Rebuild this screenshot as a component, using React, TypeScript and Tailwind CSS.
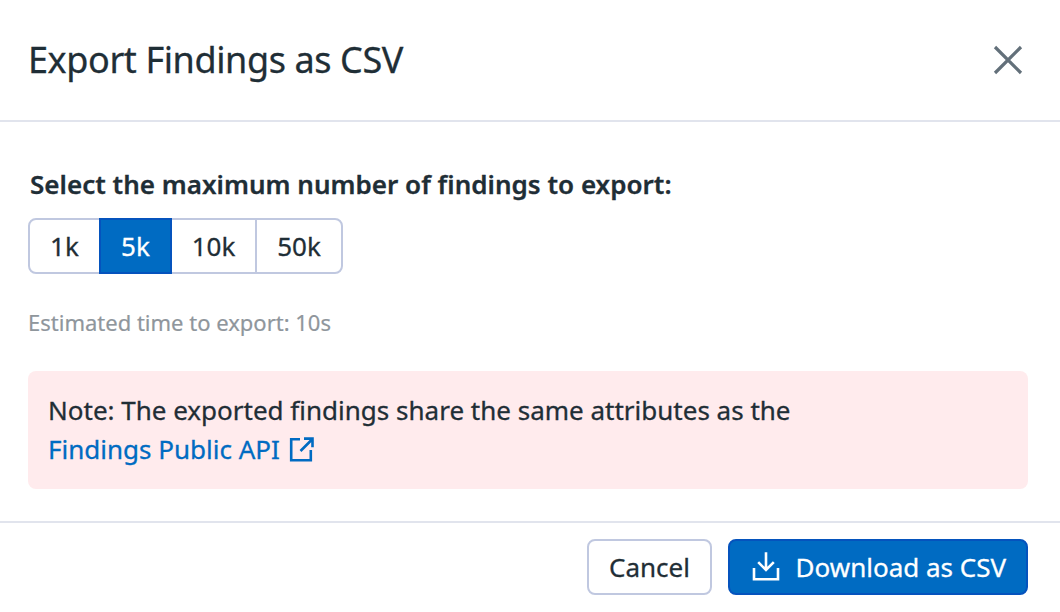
const sizes = ["1k", "5k", "10k", "50k"];
const widths: Record<string, string> = {
  "1k": "w-[73px] rounded-l-lg",
  "5k": "w-[73px] -ml-[2px]",
  "10k": "w-[87px] -ml-[2px]",
  "50k": "w-[88px] -ml-[2px] rounded-r-lg",
};

function CloseIcon() {
  return (
    <svg width="32" height="32" viewBox="0 0 32 32" fill="none" stroke="#63707a" strokeWidth="3.2">
      <path d="M3 3 29 29M29 3 3 29" />
    </svg>
  );
}

function ExternalIcon() {
  return (
    <svg width="26" height="26" viewBox="0 0 26 26" fill="none" stroke="#006bc2" strokeWidth="2.6">
      <path d="M11 2.2H2.2V23.2H21.8V13" />
      <path d="M11.5 14 23.5 2M15 1.6H23.5V10.2" />
    </svg>
  );
}

function DownloadIcon() {
  return (
    <svg width="28" height="30" viewBox="0 0 28 30" fill="none" stroke="white" strokeWidth="2.6">
      <path d="M2 16V27.2H26V16" />
      <path d="M14 .3V17M6.2 10.2 14 18 21.8 10.2" />
    </svg>
  );
}

export default function App() {
  return (
    <div className="flex h-[612px] w-[1060px] flex-col overflow-hidden bg-white font-['Noto_Sans',sans-serif] text-[26px] text-[#1f2e36] [-webkit-text-stroke:0.3px]">
      <header className="flex h-[122px] shrink-0 items-center justify-between border-b-2 border-[#e1e4ed] pr-9 pl-7">
        <h1 className="text-[36px] leading-[48px] tracking-[-0.4px] whitespace-nowrap">Export Findings as CSV</h1>
        <button aria-label="Close">
          <CloseIcon />
        </button>
      </header>

      <main className="flex h-[399px] shrink-0 flex-col px-7 pt-[42px]">
        <p className="pl-0.5 leading-10 font-semibold tracking-[0.02px] whitespace-nowrap">Select the maximum number of findings to export:</p>
        <div className="mt-[14px] flex">
          {sizes.map((size) => (
            <button
              key={size}
              className={`flex h-14 items-center justify-center border-2 ${widths[size]} ${
                size === "5k" ? "relative border-[#0553bd] bg-[#006bc2] text-white" : "border-[#c0c8e0]"
              }`}
            >
              {size}
            </button>
          ))}
        </div>
        <p className="mt-[30px] text-[22px] leading-9 whitespace-nowrap text-[#8f969c] [-webkit-text-stroke:0.2px]">Estimated time to export: 10s</p>
        <div className="mt-[31px] h-[118px] w-[1000px] rounded-lg bg-[#ffebed] px-5 pt-5 leading-[39px]">
          <p>Note: The exported findings share the same attributes as the</p>
          <a className="flex items-center gap-[9px] text-[#006bc2]">
            Findings Public API
            <ExternalIcon />
          </a>
        </div>
      </main>

      <footer className="flex h-[91px] shrink-0 justify-end gap-4 border-t-2 border-[#e1e4ed] pt-4 pr-8">
        <button className="flex h-14 w-[125px] items-center justify-center rounded-lg border-2 border-[#c0c8e0]">Cancel</button>
        <button className="flex h-14 w-[300px] items-center gap-[15.5px] rounded-lg border-2 border-[#0553bd] bg-[#006bc2] pl-[22px] whitespace-nowrap text-white">
          <DownloadIcon />
          Download as CSV
        </button>
      </footer>
    </div>
  );
}
